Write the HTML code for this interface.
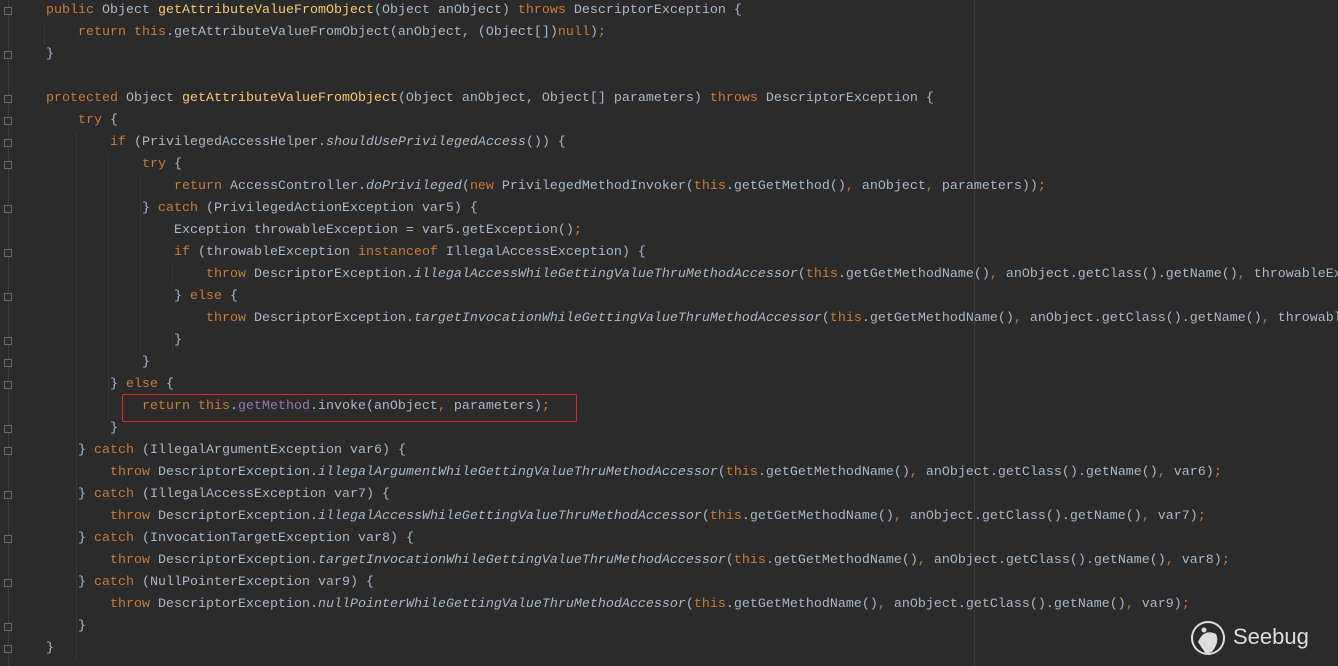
<!DOCTYPE html>
<html><head><style>
body{margin:0;width:1338px;height:666px;background:#2b2b2b;overflow:hidden;position:relative;font-family:"Liberation Mono",monospace;font-size:13.33px;color:#a9b7c6}
.l{position:absolute;left:46px;right:0;overflow:hidden;height:22px;line-height:22px;white-space:pre}
.k{color:#cc7832}.m{color:#ffc66d}.i{font-style:italic}.f{color:#9876aa}
.g{position:absolute;left:8px;width:1px;top:0;height:666px;background:#3c3c3c}
.fd{position:absolute;left:4px;width:8px;height:8px;border:1px solid #666;box-sizing:border-box;background:#2b2b2b}
.ig{position:absolute;width:1px;background:#373737}
</style></head><body>
<div class="g"></div>
<div style="position:absolute;left:974px;top:0;width:1px;height:666px;background:#3b3b3b"></div>
<div class="ig" style="left:44px;top:22px;height:22px"></div>
<div class="ig" style="left:76px;top:132px;height:528px"></div>
<div class="ig" style="left:108px;top:154px;height:264px"></div>
<div class="ig" style="left:140px;top:176px;height:176px"></div>
<div class="ig" style="left:172px;top:264px;height:22px"></div>
<div class="ig" style="left:172px;top:330px;height:22px"></div>
<div class="fd" style="top:7px"></div><div class="fd" style="top:51px"></div>
<div class="fd" style="top:95px"></div><div class="fd" style="top:117px"></div>
<div class="fd" style="top:139px"></div><div class="fd" style="top:161px"></div>
<div class="fd" style="top:205px"></div><div class="fd" style="top:249px"></div>
<div class="fd" style="top:293px"></div><div class="fd" style="top:337px"></div>
<div class="fd" style="top:359px"></div><div class="fd" style="top:381px"></div>
<div class="fd" style="top:425px"></div><div class="fd" style="top:447px"></div>
<div class="fd" style="top:491px"></div><div class="fd" style="top:535px"></div>
<div class="fd" style="top:579px"></div><div class="fd" style="top:623px"></div>
<div class="fd" style="top:645px"></div>

<div class="l" style="top:0"><span class="k">public</span> Object <span class="m">getAttributeValueFromObject</span>(Object anObject) <span class="k">throws</span> DescriptorException {</div>
<div class="l" style="top:22px">    <span class="k">return this</span>.getAttributeValueFromObject(anObject, (Object[])<span class="k">null</span>)<span class="k">;</span></div>
<div class="l" style="top:44px">}</div>
<div class="l" style="top:88px"><span class="k">protected</span> Object <span class="m">getAttributeValueFromObject</span>(Object anObject, Object[] parameters) <span class="k">throws</span> DescriptorException {</div>
<div class="l" style="top:110px">    <span class="k">try</span> {</div>
<div class="l" style="top:132px">        <span class="k">if</span> (PrivilegedAccessHelper.<span class="i">shouldUsePrivilegedAccess</span>()) {</div>
<div class="l" style="top:154px">            <span class="k">try</span> {</div>
<div class="l" style="top:176px">                <span class="k">return</span> AccessController.<span class="i">doPrivileged</span>(<span class="k">new</span> PrivilegedMethodInvoker(<span class="k">this</span>.getGetMethod()<span class="k">,</span> anObject<span class="k">,</span> parameters))<span class="k">;</span></div>
<div class="l" style="top:198px">            } <span class="k">catch</span> (PrivilegedActionException var5) {</div>
<div class="l" style="top:220px">                Exception throwableException = var5.getException()<span class="k">;</span></div>
<div class="l" style="top:242px">                <span class="k">if</span> (throwableException <span class="k">instanceof</span> IllegalAccessException) {</div>
<div class="l" style="top:264px">                    <span class="k">throw</span> DescriptorException.<span class="i">illegalAccessWhileGettingValueThruMethodAccessor</span>(<span class="k">this</span>.getGetMethodName()<span class="k">,</span> anObject.getClass().getName()<span class="k">,</span> throwableException)<span class="k">;</span></div>
<div class="l" style="top:286px">                } <span class="k">else</span> {</div>
<div class="l" style="top:308px">                    <span class="k">throw</span> DescriptorException.<span class="i">targetInvocationWhileGettingValueThruMethodAccessor</span>(<span class="k">this</span>.getGetMethodName()<span class="k">,</span> anObject.getClass().getName()<span class="k">,</span> throwableException)<span class="k">;</span></div>
<div class="l" style="top:330px">                }</div>
<div class="l" style="top:352px">            }</div>
<div class="l" style="top:374px">        } <span class="k">else</span> {</div>
<div class="l" style="top:396px">            <span class="k">return this</span>.<span class="f">getMethod</span>.invoke(anObject<span class="k">,</span> parameters)<span class="k">;</span></div>
<div class="l" style="top:418px">        }</div>
<div class="l" style="top:440px">    } <span class="k">catch</span> (IllegalArgumentException var6) {</div>
<div class="l" style="top:462px">        <span class="k">throw</span> DescriptorException.<span class="i">illegalArgumentWhileGettingValueThruMethodAccessor</span>(<span class="k">this</span>.getGetMethodName()<span class="k">,</span> anObject.getClass().getName()<span class="k">,</span> var6)<span class="k">;</span></div>
<div class="l" style="top:484px">    } <span class="k">catch</span> (IllegalAccessException var7) {</div>
<div class="l" style="top:506px">        <span class="k">throw</span> DescriptorException.<span class="i">illegalAccessWhileGettingValueThruMethodAccessor</span>(<span class="k">this</span>.getGetMethodName()<span class="k">,</span> anObject.getClass().getName()<span class="k">,</span> var7)<span class="k">;</span></div>
<div class="l" style="top:528px">    } <span class="k">catch</span> (InvocationTargetException var8) {</div>
<div class="l" style="top:550px">        <span class="k">throw</span> DescriptorException.<span class="i">targetInvocationWhileGettingValueThruMethodAccessor</span>(<span class="k">this</span>.getGetMethodName()<span class="k">,</span> anObject.getClass().getName()<span class="k">,</span> var8)<span class="k">;</span></div>
<div class="l" style="top:572px">    } <span class="k">catch</span> (NullPointerException var9) {</div>
<div class="l" style="top:594px">        <span class="k">throw</span> DescriptorException.<span class="i">nullPointerWhileGettingValueThruMethodAccessor</span>(<span class="k">this</span>.getGetMethodName()<span class="k">,</span> anObject.getClass().getName()<span class="k">,</span> var9)<span class="k">;</span></div>
<div class="l" style="top:616px">    }</div>
<div class="l" style="top:638px">}</div>

<div style="position:absolute;left:122px;top:394px;width:455px;height:28px;border:1px solid #e0242a;box-sizing:border-box;border-radius:2px"></div>

<svg style="position:absolute;left:1190px;top:620px" width="40" height="40" viewBox="0 0 40 40">
<circle cx="18" cy="18" r="16" fill="none" stroke="#ddd" stroke-width="2"/>
<path d="M8 22 Q14 8 26 14 Q30 22 22 32 L16 34 Z" fill="#ddd"/>
<circle cx="14" cy="10" r="2.5" fill="#ddd"/>
</svg>
<div style="position:absolute;left:1233px;top:624px;font-family:'Liberation Sans',sans-serif;font-size:22px;color:#ddd">Seebug</div>
</body></html>
